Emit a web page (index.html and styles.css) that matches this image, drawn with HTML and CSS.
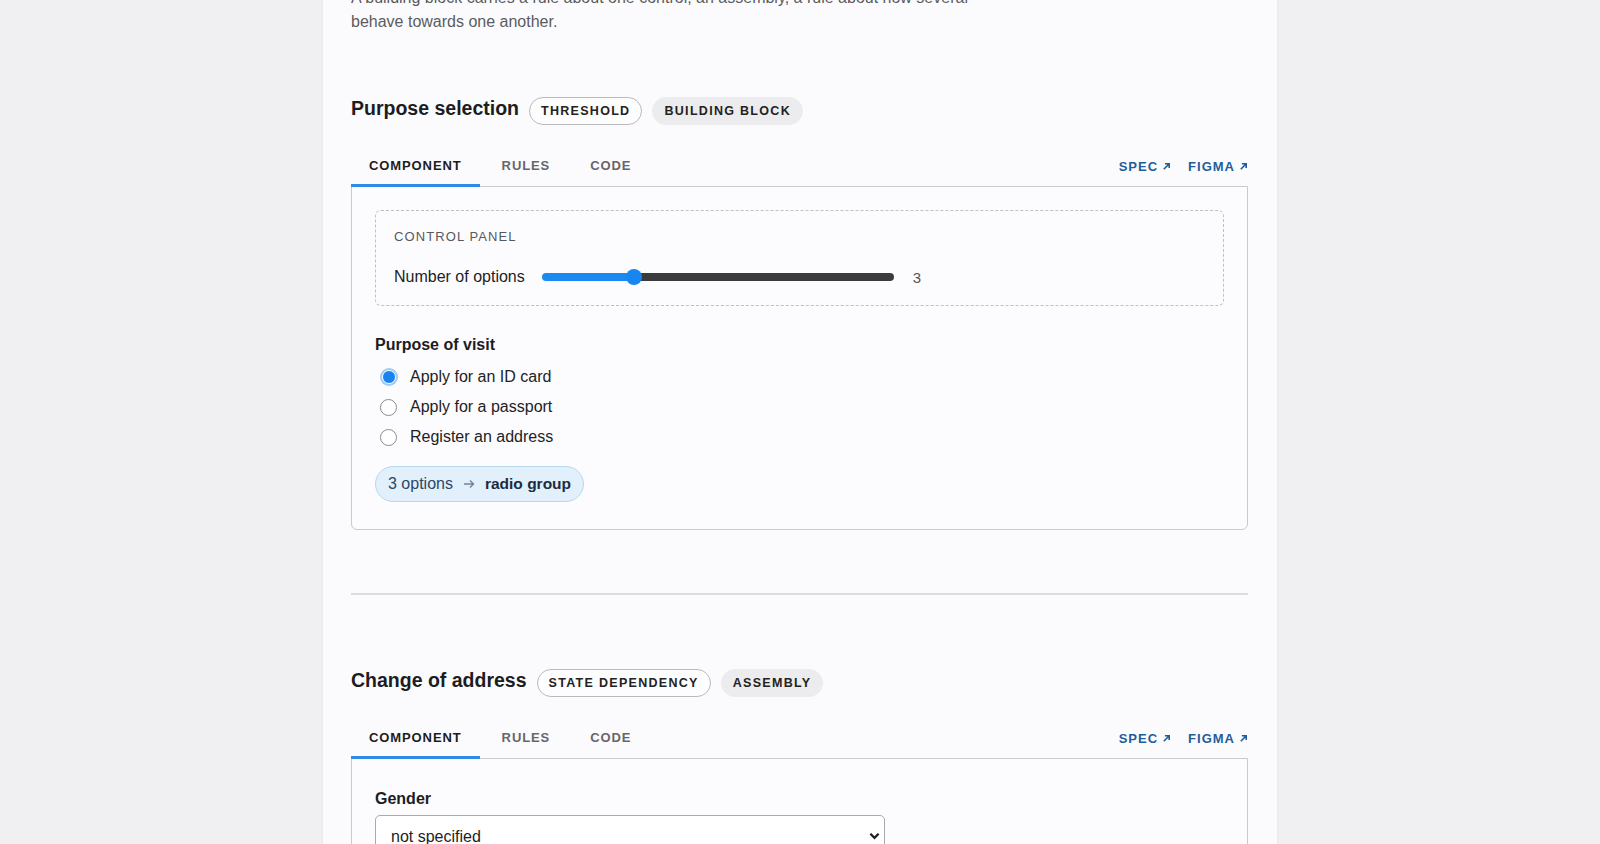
FILE: index.html
```html
<!DOCTYPE html>
<html lang="en">

<head>
	<meta charset="UTF-8">
	<meta name="viewport" content="width=device-width, initial-scale=1.0">
	<title>Building blocks</title>
	<link rel="stylesheet" href="styles.css">
</head>

<body>
	<main class="page">
		<p class="intro">A building block carries a rule about one control, an assembly, a rule about how several behave towards one another.</p>

		<section class="block">
			<div class="block-head">
				<h2>Purpose selection</h2>
				<span class="chip chip-outline">Threshold</span>
				<span class="chip chip-filled">Building block</span>
			</div>

			<nav class="tabs">
				<a href="#" class="tab active">Component</a>
				<a href="#" class="tab">Rules</a>
				<a href="#" class="tab">Code</a>
				<div class="tab-links">
					<a href="#" class="ext-link">Spec
						<svg viewBox="0 0 10 10" width="9" height="9"><path d="M2 8L8 2M3.2 2H8V6.8" /></svg>
					</a>
					<a href="#" class="ext-link">Figma
						<svg viewBox="0 0 10 10" width="9" height="9"><path d="M2 8L8 2M3.2 2H8V6.8" /></svg>
					</a>
				</div>
			</nav>

			<div class="card">
				<div class="control-panel">
					<div class="panel-label">Control panel</div>
					<div class="panel-row">
						<label for="option-count">Number of options</label>
						<input id="option-count" class="slider" type="range" min="1" max="9" value="3" style="--fill: 26%">
						<span class="slider-value">3</span>
					</div>
				</div>

				<fieldset class="radio-group">
					<legend>Purpose of visit</legend>
					<label class="radio-row"><input type="radio" name="purpose" checked> Apply for an ID card</label>
					<label class="radio-row"><input type="radio" name="purpose"> Apply for a passport</label>
					<label class="radio-row"><input type="radio" name="purpose"> Register an address</label>
				</fieldset>

				<div class="rule-badge">
					<span>3 options</span>
					<svg class="rule-arrow" viewBox="0 0 12 10" width="12" height="10"><path d="M1 5H10.5M7 1.5L10.5 5L7 8.5" /></svg>
					<strong>radio group</strong>
				</div>
			</div>
		</section>

		<hr class="divider">

		<section class="block">
			<div class="block-head">
				<h2>Change of address</h2>
				<span class="chip chip-outline">State dependency</span>
				<span class="chip chip-filled">Assembly</span>
			</div>

			<nav class="tabs">
				<a href="#" class="tab active">Component</a>
				<a href="#" class="tab">Rules</a>
				<a href="#" class="tab">Code</a>
				<div class="tab-links">
					<a href="#" class="ext-link">Spec
						<svg viewBox="0 0 10 10" width="9" height="9"><path d="M2 8L8 2M3.2 2H8V6.8" /></svg>
					</a>
					<a href="#" class="ext-link">Figma
						<svg viewBox="0 0 10 10" width="9" height="9"><path d="M2 8L8 2M3.2 2H8V6.8" /></svg>
					</a>
				</div>
			</nav>

			<div class="card">
				<div class="field">
					<label for="gender">Gender</label>
					<div class="select-wrap">
						<select id="gender">
							<option>not specified</option>
							<option>female</option>
							<option>male</option>
							<option>diverse</option>
						</select>
						<svg class="select-chevron" viewBox="0 0 12 8" width="11" height="8"><path d="M1.5 1.5L6 6L10.5 1.5" /></svg>
					</div>
				</div>

				<div class="field">
					<label for="street">Street and number</label>
					<input id="street" class="text-input" type="text">
				</div>
			</div>
		</section>
	</main>
</body>

</html>
```

FILE: styles.css
```css
html,
body {
	height: 100%;
	overflow: hidden;
}

body {
	margin: 0;
	background: #f0f0f2;
	font-family: "Liberation Sans", Arial, Helvetica, sans-serif;
	color: #1d1d1f;
}

.page {
	width: 897px;
	margin: -14px auto 0;
	padding: 0 29px 60px 28px;
	background: #fbfbfd;
	box-shadow: 0 0 3px rgba(0, 0, 0, 0.06);
	min-height: 1000px;
}

.intro {
	margin: 0;
	max-width: 660px;
	font-size: 16px;
	line-height: 24px;
	color: #5b5b60;
}

.block-head {
	display: flex;
	align-items: center;
	gap: 10px;
	height: 28px;
	margin-top: 60px;
}

.divider + .block .block-head {
	margin-top: 71px;
}

.block-head h2 {
	margin: 0;
	font-size: 19.5px;
	font-weight: bold;
	color: #1d1d1f;
}

.chip {
	display: inline-flex;
	align-items: center;
	box-sizing: border-box;
	height: 28px;
	margin-top: 6px;
	padding: 0 11px;
	border-radius: 14px;
	font-size: 12.5px;
	font-weight: bold;
	letter-spacing: 1.3px;
	text-transform: uppercase;
	color: #222;
}

.chip-outline {
	border: 1px solid #b9b9be;
	background: #fdfdfe;
}

.chip-filled {
	border: 1px solid #ececef;
	background: #ececef;
}

/* tabs sit on top of the card border */
.tabs {
	display: flex;
	margin-top: 24px;
	margin-bottom: -1px;
	position: relative;
	z-index: 1;
}

.tab {
	display: block;
	padding: 12px 18px 10px;
	margin-right: 4px;
	border-bottom: 3px solid transparent;
	font-size: 13px;
	line-height: 16px;
	font-weight: bold;
	letter-spacing: 0.9px;
	text-transform: uppercase;
	text-decoration: none;
	color: #66666b;
}

.tab.active {
	color: #1d1d1f;
	border-bottom-color: #2f8be3;
}

.tab-links {
	display: flex;
	gap: 17px;
	margin-left: auto;
	padding-top: 12px;
}

.ext-link {
	display: inline-flex;
	align-items: center;
	gap: 4px;
	height: 16px;
	font-size: 13px;
	font-weight: bold;
	letter-spacing: 1px;
	text-transform: uppercase;
	text-decoration: none;
	color: #1f5d9c;
}

.ext-link svg {
	fill: none;
	stroke: currentColor;
	stroke-width: 1.8;
}

.card {
	border: 1px solid #c9cacf;
	border-radius: 0 0 6px 6px;
	padding: 23px 23px 27px;
	background: #fcfcfe;
}

.control-panel {
	border: 1px dashed #bfc0c5;
	border-radius: 6px;
	padding: 17px 19px 16px 18px;
}

.panel-label {
	font-size: 13px;
	line-height: 18px;
	letter-spacing: 1.1px;
	text-transform: uppercase;
	color: #58585d;
	margin-bottom: 19px;
}

.panel-row {
	display: flex;
	align-items: center;
	height: 24px;
	gap: 16px;
	font-size: 16px;
	color: #1d1d1f;
}

.slider {
	-webkit-appearance: none;
	appearance: none;
	width: 352px;
	height: 8px;
	margin: 0 0 0 1px;
	border-radius: 4px;
	background: linear-gradient(to right, #1a8af2 var(--fill), #3b3b3e var(--fill));
	outline: none;
}

.slider::-webkit-slider-thumb {
	-webkit-appearance: none;
	appearance: none;
	width: 16px;
	height: 16px;
	border-radius: 50%;
	background: #1786f0;
	border: none;
}

.slider-value {
	margin-left: 3px;
	font-size: 15px;
	color: #555;
}

.radio-group {
	border: 0;
	margin: 28px 0 0;
	padding: 0;
}

.radio-group legend {
	padding: 0;
	margin-bottom: 6px;
	font-size: 16px;
	line-height: 22px;
	font-weight: bold;
	color: #1d1d1f;
}

.radio-row {
	display: flex;
	align-items: center;
	gap: 13px;
	height: 30px;
	font-size: 16px;
	color: #222;
}

.radio-row input {
	-webkit-appearance: none;
	appearance: none;
	box-sizing: border-box;
	width: 17px;
	height: 17px;
	margin: 0 0 0 5px;
	border: 1px solid #8a8a8f;
	border-radius: 50%;
	background: #fff;
}

.radio-row input:checked {
	width: 14px;
	height: 14px;
	margin: 0 1.5px 0 6.5px;
	border: 1.5px solid #fff;
	background: #1782f0;
	box-shadow: 0 0 0 2px #9fcaf3;
}

.rule-badge {
	display: inline-flex;
	align-items: center;
	gap: 10px;
	box-sizing: border-box;
	height: 36px;
	margin-top: 14px;
	padding: 0 12px;
	border: 1px solid #b6d8f1;
	border-radius: 18px;
	background: #e2f0fb;
	font-size: 16px;
	color: #2c4864;
}

.rule-arrow {
	fill: none;
	stroke: #71849a;
	stroke-width: 1.4;
}

.rule-badge strong {
	font-size: 15.5px;
	color: #1b2c3f;
}

.divider {
	border: 0;
	height: 2px;
	margin: 63px 0 0;
	background: #dcdde2;
}

.field {
	margin-top: 5px;
	margin-bottom: 20px;
}

.field label {
	display: block;
	font-size: 16px;
	line-height: 24px;
	font-weight: bold;
	color: #1d1d1f;
	margin-bottom: 4px;
}

.select-wrap {
	position: relative;
	width: 510px;
}

.select-wrap select,
.text-input {
	-webkit-appearance: none;
	appearance: none;
	box-sizing: border-box;
	width: 510px;
	height: 42px;
	padding: 0 15px;
	border: 1px solid #a9a9ae;
	border-radius: 5px;
	background: #fff;
	font-family: inherit;
	font-size: 16px;
	color: #1d1d1f;
}

.select-chevron {
	position: absolute;
	right: 5px;
	top: 17px;
	fill: none;
	stroke: #1d1d1f;
	stroke-width: 2.4;
	pointer-events: none;
}
```
